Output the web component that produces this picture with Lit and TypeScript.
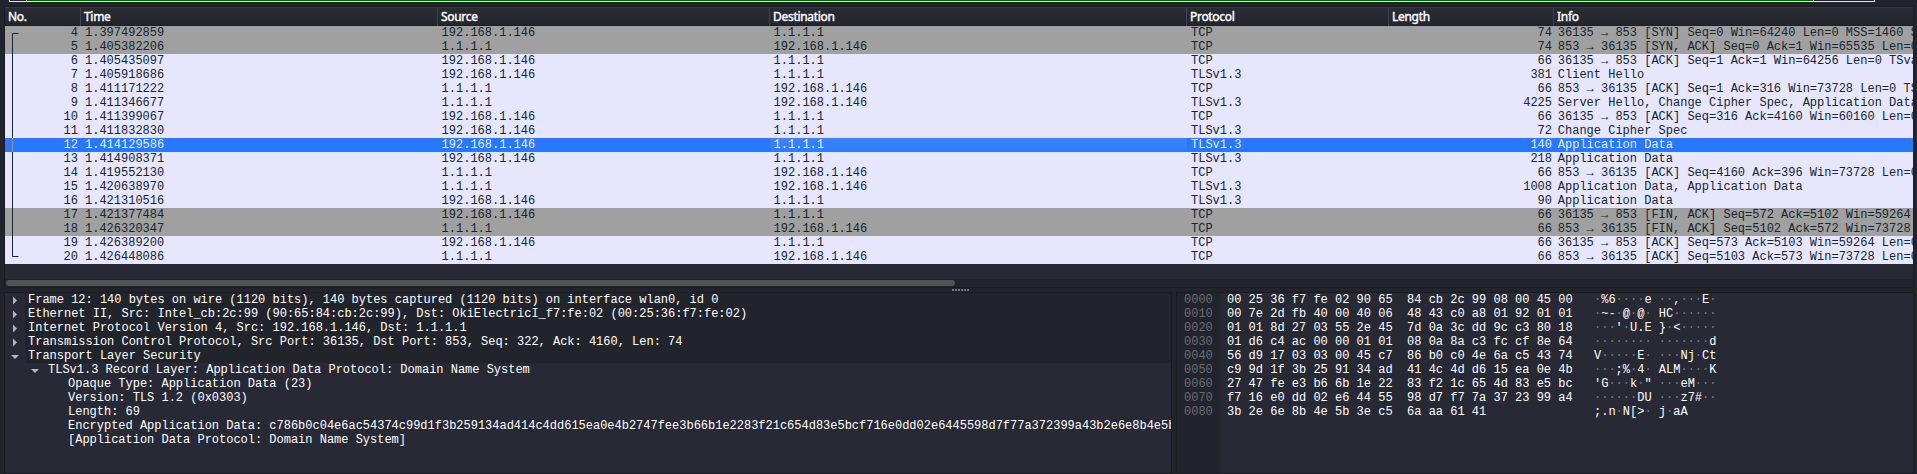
import { LitElement, html, css, svg } from "lit";
import { customElement } from "lit/decorators.js";

const A = "192.168.1.146";
const B = "1.1.1.1";
type Row = [number, string, 0 | 1, string, number, string];
const ROWS: Row[] = [
  [4, "1.397492859", 0, "TCP", 74, "36135 → 853 [SYN] Seq=0 Win=64240 Len=0 MSS=1460 S"],
  [5, "1.405382206", 1, "TCP", 74, "853 → 36135 [SYN, ACK] Seq=0 Ack=1 Win=65535 Len=0"],
  [6, "1.405435097", 0, "TCP", 66, "36135 → 853 [ACK] Seq=1 Ack=1 Win=64256 Len=0 TSva"],
  [7, "1.405918686", 0, "TLSv1.3", 381, "Client Hello"],
  [8, "1.411171222", 1, "TCP", 66, "853 → 36135 [ACK] Seq=1 Ack=316 Win=73728 Len=0 TS"],
  [9, "1.411346677", 1, "TLSv1.3", 4225, "Server Hello, Change Cipher Spec, Application Data"],
  [10, "1.411399067", 0, "TCP", 66, "36135 → 853 [ACK] Seq=316 Ack=4160 Win=60160 Len=0"],
  [11, "1.411832830", 0, "TLSv1.3", 72, "Change Cipher Spec"],
  [12, "1.414129586", 0, "TLSv1.3", 140, "Application Data"],
  [13, "1.414908371", 0, "TLSv1.3", 218, "Application Data"],
  [14, "1.419552130", 1, "TCP", 66, "853 → 36135 [ACK] Seq=4160 Ack=396 Win=73728 Len=0"],
  [15, "1.420638970", 1, "TLSv1.3", 1008, "Application Data, Application Data"],
  [16, "1.421310516", 0, "TLSv1.3", 90, "Application Data"],
  [17, "1.421377484", 0, "TCP", 66, "36135 → 853 [FIN, ACK] Seq=572 Ack=5102 Win=59264"],
  [18, "1.426320347", 1, "TCP", 66, "853 → 36135 [FIN, ACK] Seq=5102 Ack=572 Win=73728"],
  [19, "1.426389200", 0, "TCP", 66, "36135 → 853 [ACK] Seq=573 Ack=5103 Win=59264 Len=0"],
  [20, "1.426448086", 1, "TCP", 66, "853 → 36135 [ACK] Seq=5103 Ack=573 Win=73728 Len=0"],
];
const GRAY = new Set([4, 5, 17, 18]);

const TREE: [number, string, string][] = [
  [0, "closed", "Frame 12: 140 bytes on wire (1120 bits), 140 bytes captured (1120 bits) on interface wlan0, id 0"],
  [0, "closed", "Ethernet II, Src: Intel_cb:2c:99 (90:65:84:cb:2c:99), Dst: OkiElectricI_f7:fe:02 (00:25:36:f7:fe:02)"],
  [0, "closed", "Internet Protocol Version 4, Src: 192.168.1.146, Dst: 1.1.1.1"],
  [0, "closed", "Transmission Control Protocol, Src Port: 36135, Dst Port: 853, Seq: 322, Ack: 4160, Len: 74"],
  [0, "open", "Transport Layer Security"],
  [1, "open", "TLSv1.3 Record Layer: Application Data Protocol: Domain Name System"],
  [2, "", "Opaque Type: Application Data (23)"],
  [2, "", "Version: TLS 1.2 (0x0303)"],
  [2, "", "Length: 69"],
  [2, "", "Encrypted Application Data: c786b0c04e6ac54374c99d1f3b259134ad414c4dd615ea0e4b2747fee3b66b1e2283f21c654d83e5bcf716e0dd02e6445598d7f77a372399a43b2e6e8b4e5b"],
  [2, "", "[Application Data Protocol: Domain Name System]"],
];

const HEX = [
  "00 25 36 f7 fe 02 90 65  84 cb 2c 99 08 00 45 00",
  "00 7e 2d fb 40 00 40 06  48 43 c0 a8 01 92 01 01",
  "01 01 8d 27 03 55 2e 45  7d 0a 3c dd 9c c3 80 18",
  "01 d6 c4 ac 00 00 01 01  08 0a 8a c3 fc cf 8e 64",
  "56 d9 17 03 03 00 45 c7  86 b0 c0 4e 6a c5 43 74",
  "c9 9d 1f 3b 25 91 34 ad  41 4c 4d d6 15 ea 0e 4b",
  "27 47 fe e3 b6 6b 1e 22  83 f2 1c 65 4d 83 e5 bc",
  "f7 16 e0 dd 02 e6 44 55  98 d7 f7 7a 37 23 99 a4",
  "3b 2e 6e 8b 4e 5b 3e c5  6a aa 61 41",
];
const ascii = (line: string) =>
  line.split("  ").map((half) =>
    half.split(" ").map((h) => {
      const c = parseInt(h, 16);
      return c > 31 && c < 127 ? String.fromCharCode(c) : "·";
    }).join("")
  ).join(" ");

@customElement("packet-list")
class PacketList extends LitElement {
  static styles = css`
    :host { display: flex; flex-direction: column; overflow: hidden; background: #272934; }
    .head, .row { display: grid; grid-template-columns: 76px 357px 332px 417px 202px 165px 1fr; }
    .head { height: 19px; box-sizing: border-box; border-top: 1px solid #383b42; border-bottom: 1px solid #1b1d23;
      background: linear-gradient(#292c34, #23262d); color: #fff; font: 400 12px/18px "Noto Sans", sans-serif;
      letter-spacing: -0.3px; -webkit-text-stroke: 0.4px #fff; }
    .head span { padding-left: 3px; border-right: 1px solid #41444c; line-height: 18px; }
    .head span:last-child { border: 0; }
    .list { position: relative; }
    .row { height: 14px; line-height: 14px; background: #e7e6ff; color: #12272e; }
    .row span { padding-left: 4px; white-space: pre; overflow: hidden; }
    .row .addr { padding-left: 3.6px; }
    .row .num { text-align: right; padding: 0 3px 0 0; }
    .row .len { padding-right: 2px; }
    .row .info { padding-left: 3.8px; }
    .gray { background: #a0a0a0; }
    .sel { background: #2777ff; color: #e8f1ff; }
    .sel .hover { background: linear-gradient(#3a82ff, #2f7cff); }
    .trace { position: absolute; left: 0; top: 0; }
    .space { flex: 1; }
    .bar { height: 8px; box-sizing: border-box; background: #22242c; padding: 1px; }
    .thumb { width: 949px; height: 6px; border-radius: 3px; background: #525355; }
  `;
  render() {
    return html`
      <div class="head">${["No.", "Time", "Source", "Destination", "Protocol", "Length", "Info"].map((h) => html`<span>${h}</span>`)}</div>
      <div class="list">
        ${ROWS.map(([n, t, d, p, l, i]) => html`<div class="row ${n === 12 ? "sel" : GRAY.has(n) ? "gray" : ""}"><span class="num">${n}</span><span>${t}</span><span class="addr">${d ? B : A}</span><span class="addr hover">${d ? A : B}</span><span>${p}</span><span class="num len">${l}</span><span class="info">${i}</span></div>`)}
        <svg class="trace" width="20" height="238">${svg`<path d="M13.5 7.5H7.5V230.5H13.5" fill="none" stroke="#12272e"/><path d="M7.5 112V126" stroke="#8d98a8"/>`}</svg>
      </div>
      <div class="space"></div>
      <div class="bar"><div class="thumb"></div></div>`;
  }
}

@customElement("detail-tree")
class DetailTree extends LitElement {
  static styles = css`
    :host { display: block; overflow: hidden; background: #272934; color: #fff; }
    .row { display: flex; height: 14px; line-height: 14px; }
    .row svg { flex: none; width: 20px; height: 14px; fill: #b4b5b9; }
    .d1 { padding-left: 20px; }
    .d2 { padding-left: 40px; }
    .text { flex: 1; min-width: 0; overflow: hidden; white-space: pre; padding-left: 3px; letter-spacing: -0.01px; }
    .d0 .text { background: #22242c; }
  `;
  render() {
    return html`${TREE.map(([d, s, t]) => html`<div class="row d${d}"><svg viewBox="0 0 20 14">${s === "closed" ? svg`<path d="M8 3.5L12 7.5L8 11.5Z"/>` : s === "open" ? svg`<path d="M6 6H14L10 10Z"/>` : ""}</svg><span class="text">${t}</span></div>`)}`;
  }
}

@customElement("hex-view")
class HexView extends LitElement {
  static styles = css`
    :host { display: flex; overflow: hidden; background: #272934; color: #fff; line-height: 14px; white-space: pre; }
    .offs { width: 43px; padding-left: 7px; box-sizing: border-box; background: #22242c; color: #696b71; }
    .hex { width: 374px; padding-left: 7px; box-sizing: border-box; }
    .dim { color: #7c7e85; }
  `;
  render() {
    return html`<div class="offs">${HEX.map((_, i) => html`<div>00${i}0</div>`)}</div><div class="hex">${HEX.map((h) => html`<div>${h}</div>`)}</div><div>${HEX.map((h) => html`<div>${ascii(h).split(/(·+)/).map((p) => p[0] === "·" ? html`<span class="dim">${p}</span>` : p)}</div>`)}</div>`;
  }
}

@customElement("app-root")
class AppRoot extends LitElement {
  static styles = css`
    :host { display: flex; flex-direction: column; box-sizing: border-box; width: 1917px; height: 474px; overflow: hidden;
      background: #22242c; font: 12px/14px "Liberation Mono", monospace; }
    .filter { display: flex; flex: none; height: 1px; margin: 0 42px 0 9px; border: 1px solid #e8e8e8; border-top: 0; }
    .cap { width: 16px; background: #22242c; border-right: 1px solid #e8e8e8; }
    .green { flex: 1; background: #006400; border-right: 1px solid #e8e8e8; }
    .end { width: 60px; }
    .frame { border: 1px solid #1a1c22; }
    packet-list { flex: none; margin: 4px 3px 0 4px; height: 280px; }
    .grip { height: 4px; padding-left: 3px; display: flex; gap: 1px; justify-content: center; align-items: center; }
    .grip i { width: 2px; height: 2px; background: #76787e; }
    .panes { flex: 1; min-height: 0; display: flex; gap: 4px; margin: 0 3px 0 4px; }
    detail-tree { width: 1166px; flex: none; }
    hex-view { flex: 1; }
  `;
  render() {
    return html`
      <div class="filter"><div class="cap"></div><div class="green"></div><div class="end"></div></div>
      <packet-list class="frame"></packet-list>
      <div class="grip"><i></i><i></i><i></i><i></i><i></i><i></i></div>
      <div class="panes"><detail-tree class="frame"></detail-tree><hex-view class="frame"></hex-view></div>`;
  }
}
